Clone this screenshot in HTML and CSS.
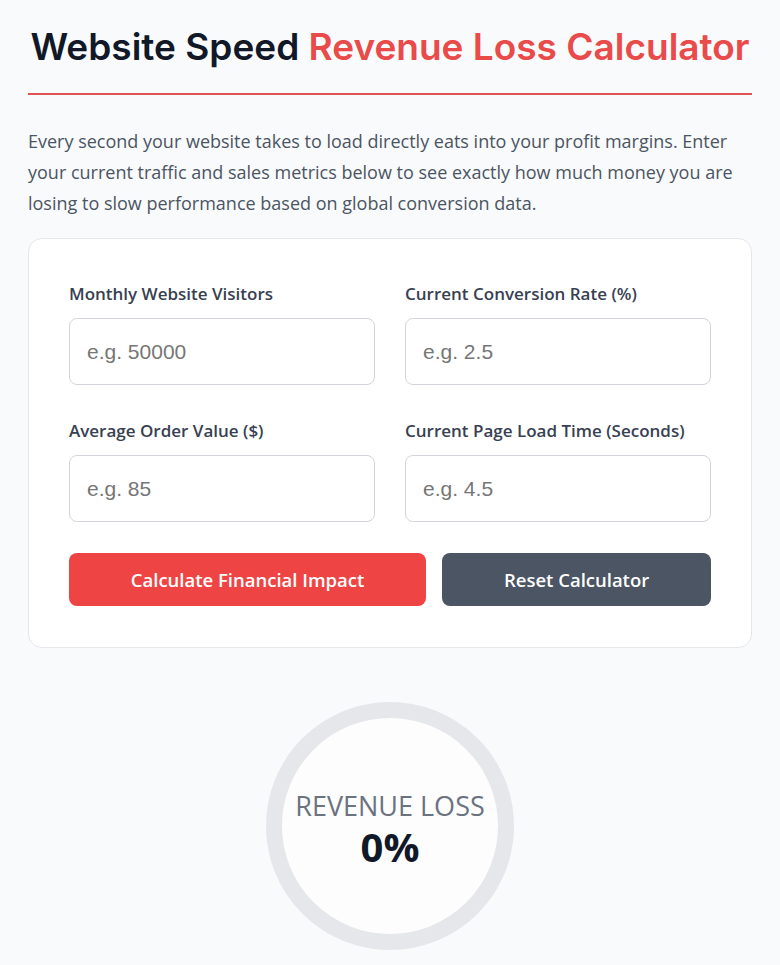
FILE: index.html
```html
<!DOCTYPE html>
<html lang="en">
<head>
  <meta charset="UTF-8">
  <title>Website Speed Revenue Loss Calculator</title>
  <link rel="stylesheet" href="styles.css">
</head>
<body>
  <div class="wrap">
    <h1 class="title">Website Speed <span class="accent">Revenue Loss Calculator</span></h1>

    <p class="intro">Every second your website takes to load directly eats into your profit margins. Enter your current traffic and sales metrics below to see exactly how much money you are losing to slow performance based on global conversion data.</p>

    <div class="card">
      <div class="fields">
        <div class="field">
          <label for="visitors">Monthly Website Visitors</label>
          <input type="number" id="visitors" placeholder="e.g. 50000">
        </div>
        <div class="field">
          <label for="rate">Current Conversion Rate (%)</label>
          <input type="number" id="rate" placeholder="e.g. 2.5">
        </div>
        <div class="field">
          <label for="order">Average Order Value ($)</label>
          <input type="number" id="order" placeholder="e.g. 85">
        </div>
        <div class="field">
          <label for="load">Current Page Load Time (Seconds)</label>
          <input type="number" id="load" placeholder="e.g. 4.5">
        </div>
      </div>

      <div class="actions">
        <button type="button" class="btn btn-calc">Calculate Financial Impact</button>
        <button type="button" class="btn btn-reset">Reset Calculator</button>
      </div>
    </div>

    <div class="result">
      <div class="gauge">
        <span class="gauge-label">REVENUE LOSS</span>
        <span class="gauge-value">0%</span>
      </div>
    </div>
  </div>
</body>
</html>
```

FILE: styles.css
```css
*{
  box-sizing:border-box;
}
body{
  margin:0;
  background:#f9fafb;
  font-family:"Open Sans","Noto Sans",sans-serif;
  color:#111827;
}
.wrap{
  padding:25px 28px 0;
}
.title{
  margin:0;
  padding-bottom:25px;
  border-bottom:2px solid #e05353;
  text-align:center;
  font-family:Inter,"Noto Sans",sans-serif;
  font-size:37px;
  font-weight:600;
  line-height:43px;
  color:#111827;
}
.title .accent{
  color:#e94a4a;
}
.intro{
  margin:31px 0 19px;
  font-size:18px;
  line-height:31px;
  color:#4b5563;
}
.card{
  background:#fff;
  border:1px solid #e5e7eb;
  border-radius:14px;
  padding:43px 40px 41px;
}
.fields{
  display:grid;
  grid-template-columns:1fr 1fr;
  column-gap:30px;
  row-gap:34px;
}
.field label{
  display:block;
  margin-bottom:12px;
  font-size:17px;
  font-weight:600;
  line-height:24px;
  color:#374151;
}
.field input{
  display:block;
  width:100%;
  height:67px;
  padding:0 17px;
  border:1px solid #d1d5db;
  border-radius:8px;
  background:#fff;
  font-family:"Liberation Sans",Arial,sans-serif;
  font-size:21px;
  color:#111827;
}
.field input::placeholder{
  color:#767676;
}
.actions{
  display:flex;
  gap:16px;
  margin-top:31px;
}
.btn{
  flex:1 1 auto;
  height:53px;
  border:0;
  border-radius:8px;
  font-family:"Open Sans","Noto Sans",sans-serif;
  font-size:18.5px;
  font-weight:600;
  color:#fff;
  cursor:pointer;
}
.btn-calc{
  background:#ef4444;
}
.btn-reset{
  background:#4b5563;
}
.result{
  display:flex;
  justify-content:center;
  padding:54px 0 16px;
}
.gauge{
  width:248px;
  height:248px;
  padding-top:8px;
  border:16px solid #e5e7eb;
  border-radius:50%;
  background:#fdfdfd;
  display:flex;
  flex-direction:column;
  align-items:center;
  justify-content:center;
  gap:4px;
}
.gauge-label{
  font-size:27px;
  line-height:30px;
  color:#6b7280;
}
.gauge-value{
  font-size:40px;
  font-weight:700;
  line-height:44px;
  color:#111827;
}
```
